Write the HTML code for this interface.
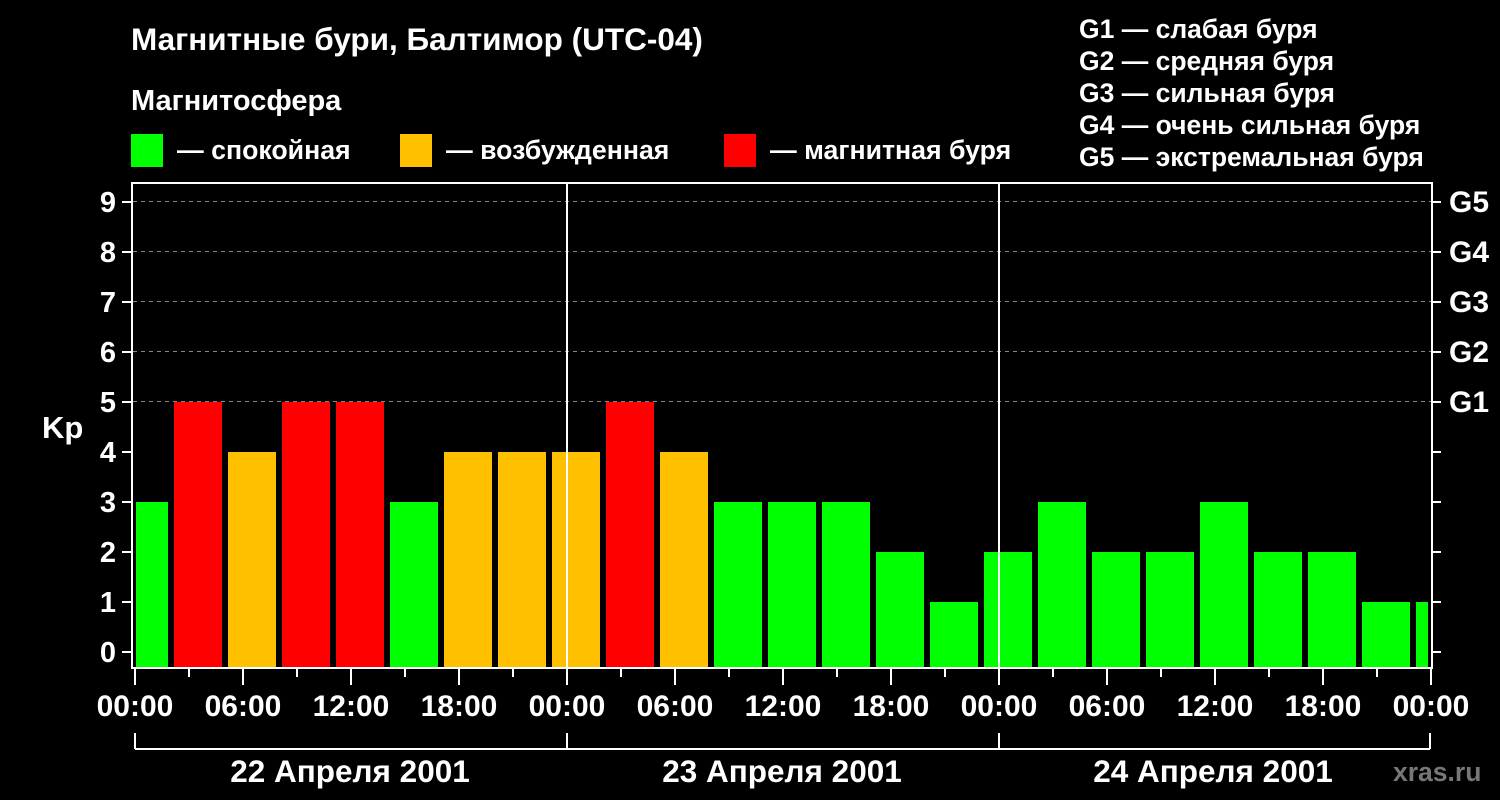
<!DOCTYPE html>
<html><head><meta charset="utf-8"><style>
body{margin:0;background:#000;width:1500px;height:800px;overflow:hidden}
svg{display:block}
text{font-family:"Liberation Sans",sans-serif;font-weight:bold;fill:#fff}
</style></head><body>
<svg width="1500" height="800" viewBox="0 0 1500 800">
<text x="131" y="50" font-size="31.5">Магнитные бури, Балтимор (UTC-04)</text>
<text x="131" y="110" font-size="29">Магнитосфера</text>
<rect x="131" y="134" width="32" height="33" fill="#00ff00"/>
<text x="177" y="159" font-size="26.7">— спокойная</text>
<rect x="400" y="134" width="32" height="33" fill="#ffc000"/>
<text x="446" y="159" font-size="26.7">— возбужденная</text>
<rect x="724" y="134" width="32" height="33" fill="#ff0000"/>
<text x="770" y="159" font-size="26.7">— магнитная буря</text>
<g font-size="26.5">
<text x="1079" y="38">G1 — слабая буря</text>
<text x="1079" y="70">G2 — средняя буря</text>
<text x="1079" y="102">G3 — сильная буря</text>
<text x="1079" y="134">G4 — очень сильная буря</text>
<text x="1079" y="166">G5 — экстремальная буря</text>
</g>
<g stroke="#888" stroke-width="1" stroke-dasharray="4,4">
<line x1="133" y1="201.5" x2="1431" y2="201.5"/>
<line x1="133" y1="251.5" x2="1431" y2="251.5"/>
<line x1="133" y1="301.5" x2="1431" y2="301.5"/>
<line x1="133" y1="351.5" x2="1431" y2="351.5"/>
<line x1="133" y1="401.5" x2="1431" y2="401.5"/>
</g>
<g id="bars"></g>
<g stroke="#fff" stroke-width="2" fill="none">
<rect x="132" y="183" width="1300" height="485"/>
<line x1="567" y1="183" x2="567" y2="668"/>
<line x1="999" y1="183" x2="999" y2="668"/>
<line x1="135" y1="749" x2="1430" y2="749"/>
<line x1="135" y1="733" x2="135" y2="749"/>
<line x1="567" y1="733" x2="567" y2="749"/>
<line x1="999" y1="733" x2="999" y2="749"/>
<line x1="1430" y1="733" x2="1430" y2="749"/>
</g>
<g id="ticks" stroke="#fff" stroke-width="2"></g>
<g font-size="29" text-anchor="end" id="ylab"></g>
<g font-size="30">
<text x="1449" y="212">G5</text><text x="1449" y="262">G4</text><text x="1449" y="312">G3</text><text x="1449" y="362">G2</text><text x="1449" y="412">G1</text>
</g>
<text x="42" y="438" font-size="31">Kp</text>
<g font-size="30" text-anchor="middle" id="xlab"></g>
<g font-size="31.5" text-anchor="middle">
<text x="350" y="782">22 Апреля 2001</text>
<text x="782" y="782">23 Апреля 2001</text>
<text x="1213" y="782">24 Апреля 2001</text>
</g>
<text x="1393" y="781" font-size="26.5" style="fill:#777">xras.ru</text>
</svg>
<script>
var ns="http://www.w3.org/2000/svg";
function el(p,t,a,txt){var e=document.createElementNS(ns,t);for(var k in a)e.setAttribute(k,a[k]);if(txt)e.textContent=txt;document.getElementById(p).appendChild(e);}
var v=[3,5,4,5,5,3,4,4,4,5,4,3,3,3,2,1,2,3,2,2,3,2,2,1,1];
v.forEach(function(x,k){var x0=135+54*k-15,x1=x0+48;if(x0<136)x0=136;if(x1>1428)x1=1428;
var c=x>=5?"#ff0000":x==4?"#ffc000":"#00ff00";var y=652-50*x;
el("bars","rect",{x:x0,y:y,width:x1-x0,height:668-y,fill:c});});
for(var i=0;i<=9;i++){var y=652-50*i;
el("ticks","line",{x1:122,y1:y,x2:131,y2:y});el("ticks","line",{x1:1433,y1:y,x2:1441,y2:y});
el("ylab","text",{x:116,y:y+10},""+i);}
var lab=["00:00","06:00","12:00","18:00"];
for(var j=0;j<=24;j++){var x=135+54*j;var maj=j%2==0;
el("ticks","line",{x1:x,y1:669,x2:x,y2:maj?685:677});
if(maj){var L=lab[(j/2)%4];el("xlab","text",{x:x,y:716},L);}}
</script>
</body></html>
